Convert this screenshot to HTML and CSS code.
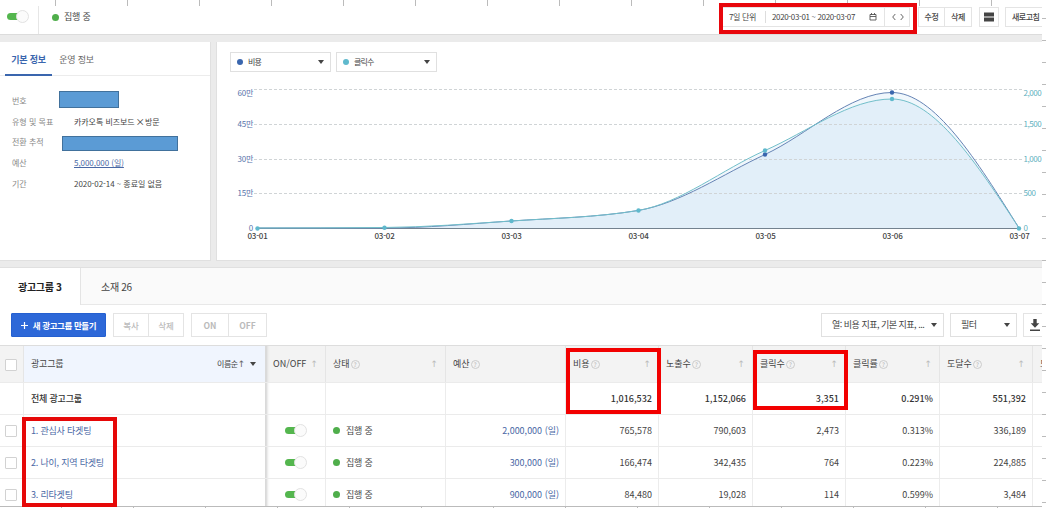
FILE: index.html
```html
<!DOCTYPE html>
<html lang="ko">
<head>
<meta charset="utf-8">
<title>광고그룹</title>
<link rel="stylesheet" href="styles.css">
</head>

<body>
<div class="sheet">
<div class="screen">

<!-- Header -->
<header class="topbar">
	<div class="topbar_toggle"><span class="toggle"></span></div>
	<div class="state"><i class="dot green"></i><span>집행 중</span></div>
	<div class="period">
		<span class="unit">7일 단위</span>
		<span class="range">2020-03-01 ~ 2020-03-07</span>
		<svg class="calendar" width="8" height="8" viewBox="0 0 8 8"><path d="M1 1.5h6v5.5h-6zM1 3.5h6M2.5 0v2M5.5 0v2"/></svg>
		<span class="arrows">
			<svg width="12" height="8" viewBox="0 0 12 8"><path d="M3.3 1L0.7 4L3.3 7M8.7 1L11.3 4L8.7 7"/></svg>
		</span>
	</div>
	<div class="group edit"><button>수정</button><button>삭제</button></div>
	<button class="layout"><svg width="10" height="10" viewBox="0 0 10 10"><path d="M0 0.5h10v4H0zM0 5.5h10v4H0z"/></svg></button>
	<button class="refresh">새로고침</button>
</header>

<!-- Info and chart -->
<div class="panels">
	<section class="panel info">
		<nav class="info_tabs"><a class="active">기본 정보</a><a>운영 정보</a></nav>
		<dl>
			<dt>번호</dt><dd class="wide"><span class="mask short"></span></dd>
			<dt>유형 및 목표</dt><dd>카카오톡 비즈보드 ⨉ 방문</dd>
			<dt>전환 추적</dt><dd class="wide"><span class="mask long"></span></dd>
			<dt>예산</dt><dd><a class="link">5,000,000 (일)</a></dd>
			<dt>기간</dt><dd>2020-02-14 ~ 종료일 없음</dd>
		</dl>
	</section>

	<section class="panel chart">
		<div class="metrics">
			<div class="select"><i class="dot blue"></i><span>비용</span><i class="caret"></i></div>
			<div class="select"><i class="dot teal"></i><span>클릭수</span><i class="caret"></i></div>
		</div>
		<svg class="plot" width="825" height="165" viewBox="0 0 825 165">
			<path class="area" d="M40 148H167C209.3 148 251.7 143.9 294 141S378.7 137.5 421 130.5S505.7 94.2 548 74.5S632.7 12.5 675 12.5S759.7 80.3 802 148Z"/>
			<path class="area" d="M40 148C82.3 148 124.7 147.8 167 147.5S251.7 143.8 294 141S378.7 137.5 421 130.5S505.7 89.1 548 70.5S632.7 19 675 19S759.7 83.5 802 148Z"/>
			<g class="grid">
				<path d="M37 9.5H805M37 44.5H805M37 79.5H805M37 113.5H805"/>
			</g>
			<path class="axis" d="M40 148.5H802"/>
			<path class="line blue" d="M40 148H167C209.3 148 251.7 143.9 294 141S378.7 137.5 421 130.5S505.7 94.2 548 74.5S632.7 12.5 675 12.5S759.7 80.3 802 148"/>
			<path class="line teal" d="M40 148C82.3 148 124.7 147.8 167 147.5S251.7 143.8 294 141S378.7 137.5 421 130.5S505.7 89.1 548 70.5S632.7 19 675 19S759.7 83.5 802 148"/>
			<g class="points blue">
				<circle cx="548" cy="74.5" r="2.2"/><circle cx="675" cy="12.5" r="2.2"/>
			</g>
			<g class="points teal">
				<circle cx="40.5" cy="148.5" r="2.2"/><circle cx="167.5" cy="147.8" r="2.2"/><circle cx="294.5" cy="141" r="2.2"/>
				<circle cx="421.5" cy="130.5" r="2.2"/><circle cx="548" cy="70.5" r="2.2"/><circle cx="675" cy="19" r="2.2"/>
				<circle cx="802" cy="148.5" r="2.2"/>
			</g>
			<g class="label left">
				<text x="36" y="15.5">60만</text><text x="36" y="46.5">45만</text><text x="36" y="81.5">30만</text>
				<text x="36" y="116">15만</text><text x="36" y="151">0</text>
			</g>
			<g class="label right">
				<text x="806.5" y="15.5">2,000</text><text x="806.5" y="46.5">1,500</text><text x="806.5" y="81.5">1,000</text>
				<text x="806.5" y="116">500</text><text x="806.5" y="151">0</text>
			</g>
			<g class="label days">
				<text x="40.5" y="159">03-01</text><text x="167.5" y="159">03-02</text><text x="294.5" y="159">03-03</text>
				<text x="421.5" y="159">03-04</text><text x="548.5" y="159">03-05</text><text x="675.5" y="159">03-06</text>
				<text x="802.5" y="159">03-07</text>
			</g>
		</svg>
	</section>
</div>

<!-- Ad groups -->
<nav class="tabs"><a class="active">광고그룹 3</a><a>소재 26</a></nav>

<div class="toolbar">
	<button class="create"><svg width="7" height="7" viewBox="0 0 7 7"><path d="M0 3.5h7M3.5 0v7"/></svg>새 광고그룹 만들기</button>
	<div class="group off copy"><button>복사</button><button>삭제</button></div>
	<div class="group off onoff"><button>ON</button><button>OFF</button></div>
	<div class="select columns"><span>열: 비용 지표, 기본 지표, ...</span><i class="caret"></i></div>
	<div class="select filter"><span>필터</span><i class="caret"></i></div>
	<button class="download"><svg width="10" height="13" viewBox="0 0 10 13"><path d="M3.3 0h3.4v4.2h2.6L5 8.8L0.7 4.2h2.6zM0 10.6h10v1.4H0z"/></svg></button>
</div>

<div class="table">
	<div class="row head">
		<div class="check"><i class="box"></i></div>
		<div class="name"><span>광고그룹</span><span class="sort">이름순<b class="up"></b><i class="caret"></i></span></div>
		<div><span>ON/OFF</span><b class="up"></b></div>
		<div><span>상태</span><i class="help">?</i><b class="up"></b></div>
		<div><span>예산</span><i class="help">?</i></div>
		<div><span>비용</span><i class="help">?</i><b class="up"></b></div>
		<div><span>노출수</span><i class="help">?</i><b class="up"></b></div>
		<div><span>클릭수</span><i class="help">?</i><b class="up"></b></div>
		<div><span>클릭률</span><i class="help">?</i><b class="up"></b></div>
		<div><span>도달수</span><i class="help">?</i><b class="up"></b></div>
		<div><span>도</span></div>
	</div>
	<div class="row total">
		<div class="check"></div>
		<div class="name">전체 광고그룹</div>
		<div></div><div></div><div></div>
		<div class="num">1,016,532</div>
		<div class="num">1,152,066</div>
		<div class="num">3,351</div>
		<div class="num">0.291%</div>
		<div class="num">551,392</div>
		<div></div>
	</div>
	<div class="row">
		<div class="check"><i class="box"></i></div>
		<div class="name"><a>1. 관심사 타겟팅</a></div>
		<div class="switch"><span class="toggle"></span></div>
		<div class="status"><i class="dot green"></i><span>집행 중</span></div>
		<div class="num"><a>2,000,000 (일)</a></div>
		<div class="num">765,578</div>
		<div class="num">790,603</div>
		<div class="num">2,473</div>
		<div class="num">0.313%</div>
		<div class="num">336,189</div>
		<div></div>
	</div>
	<div class="row">
		<div class="check"><i class="box"></i></div>
		<div class="name"><a>2. 나이, 지역 타겟팅</a></div>
		<div class="switch"><span class="toggle"></span></div>
		<div class="status"><i class="dot green"></i><span>집행 중</span></div>
		<div class="num"><a>300,000 (일)</a></div>
		<div class="num">166,474</div>
		<div class="num">342,435</div>
		<div class="num">764</div>
		<div class="num">0.223%</div>
		<div class="num">224,885</div>
		<div></div>
	</div>
	<div class="row">
		<div class="check"><i class="box"></i></div>
		<div class="name"><a>3. 리타겟팅</a></div>
		<div class="switch"><span class="toggle"></span></div>
		<div class="status"><i class="dot green"></i><span>집행 중</span></div>
		<div class="num"><a>900,000 (일)</a></div>
		<div class="num">84,480</div>
		<div class="num">19,028</div>
		<div class="num">114</div>
		<div class="num">0.599%</div>
		<div class="num">3,484</div>
		<div></div>
	</div>
</div>

</div>

<!-- Sheet grid ticks around the screen -->
<div class="ticks top"></div>
<div class="ticks side"></div>
<div class="ticks bottom"></div>

<!-- Red highlight boxes -->
<div class="mark mark_period"></div>
<div class="mark mark_cost"></div>
<div class="mark mark_clicks"></div>
<div class="mark mark_names"></div>
</div>
</body>
</html>
```

FILE: styles.css
```css
* {
	box-sizing: border-box;
}

body {
	margin: 0;
	background: white;
	color: #444;
	font-family: "Noto Sans CJK KR", sans-serif;
	font-size: 9px;
	line-height: 12px;
	overflow: hidden;
}

button {
	font: inherit;
	color: #444;
	background: white;
	border: 1px solid #e4e4e4;
	padding: 0;
}

i, b {
	font-style: normal;
	flex: none;
}

.sheet {
	position: relative;
	width: 1046px;
	height: 508px;
	overflow: hidden;
}

.screen {
	width: 1042px;
	height: 507px;
	overflow: hidden;
	border-bottom: 1px solid #bbb;
}

/* Header */
.topbar {
	display: flex;
	align-items: center;
	height: 34px;
	font-size: 8px;
	white-space: nowrap;
}

.topbar_toggle {
	display: flex;
	align-items: center;
	width: 39px;
	height: 28px;
	margin-top: 6px;
	padding: 0 0 7px 7px;
	border-right: 1px solid #e6e6e6;
}

.toggle {
	display: flex;
	justify-content: flex-end;
	align-items: center;
	width: 22px;
	height: 7px;
	border-radius: 4px;
	background: linear-gradient(to right, #54b64e 16px, transparent 16px);
}

.toggle::after {
	content: "";
	width: 11px;
	height: 11px;
	flex: none;
	border: 1px solid #e2e2e2;
	border-radius: 50%;
	background: #fbfbfb;
}

.dot {
	width: 6px;
	height: 6px;
	border-radius: 50%;
}

.dot.green {
	width: 7px;
	height: 7px;
	background: #4fae4b;
}

.dot.blue { background: #3a66ae; }
.dot.teal { background: #5fb9cd; }

.state {
	display: flex;
	align-items: center;
	gap: 5px;
	margin-left: 13px;
	font-size: 9px;
	letter-spacing: -0.2px;
}

.period {
	display: flex;
	align-items: center;
	width: 190px;
	height: 20px;
	margin-left: auto;
	padding-left: 8px;
	border: 1px solid #e4e4e4;
}

.unit {
	width: 37px;
	border-right: 1px solid #ddd;
	letter-spacing: -0.35px;
}

.range {
	width: 103px;
	padding-left: 6px;
	letter-spacing: -0.35px;
}

.period svg {
	flex: none;
	fill: none;
	stroke: #555;
	stroke-width: 0.9;
}

.arrows {
	display: flex;
	align-items: center;
	height: 18px;
	margin-left: 7px;
	padding-left: 7px;
	border-left: 1px solid #e4e4e4;
}

.group {
	display: flex;
}

.group button + button {
	border-left: 0;
}

.edit {
	margin-left: 8px;
}

.edit button {
	width: 27px;
	height: 20px;
	font-weight: 500;
	letter-spacing: -0.3px;
}

.layout {
	display: flex;
	justify-content: center;
	align-items: center;
	width: 20px;
	height: 20px;
	margin-left: 7px;
}

.layout svg, .download svg {
	fill: #444;
}

.refresh {
	width: 37px;
	height: 20px;
	margin-left: 6px;
	padding-left: 6px;
	border-right: 0;
	text-align: left;
	font-weight: 500;
	letter-spacing: -0.5px;
}

/* Panels */
.panels {
	display: flex;
	gap: 6px;
	height: 233px;
	padding: 7px 0 6px;
	background: #ebebeb;
	border-top: 1px solid #dcdcdc;
}

.panel {
	background: white;
	border: 1px solid #e0e0e0;
	border-top: 0;
}

.info {
	width: 211px;
	border-left: 0;
	font-size: 8px;
}

.info_tabs {
	display: flex;
	height: 34px;
	padding-left: 5px;
	border-bottom: 1px solid #ececec;
	font-size: 9px;
}

.info_tabs a {
	width: 47px;
	height: 34px;
	padding-top: 12px;
	text-align: center;
	color: #666;
	white-space: nowrap;
	letter-spacing: -0.2px;
}

.info_tabs a + a {
	margin-left: 1px;
}

.info_tabs .active {
	border-bottom: 2px solid #3a66ae;
	color: #3a66ae;
	font-weight: bold;
}

dl {
	display: grid;
	grid-template-columns: 62px 1fr;
	grid-auto-rows: 20.6px;
	align-items: center;
	margin: 15px 0 0 12px;
}

dt {
	color: #888;
	white-space: nowrap;
}

dd {
	margin: 0;
	white-space: nowrap;
	letter-spacing: -0.05px;
}

.wide {
	display: flex;
}

.mask {
	background: #5b9bd5;
	border: 1px solid #41719c;
}

.short {
	width: 60px;
	height: 17px;
	margin: -3px 0 0 -15px;
}

.long {
	width: 116px;
	height: 15px;
	margin: 2px 0 0 -12px;
}

a {
	color: #4a68a5;
}

.link {
	text-decoration: underline;
}

.chart {
	flex: 1;
	border-right: 0;
	padding: 10px 0 0 13px;
	margin-left: -1px;
}

.metrics {
	display: flex;
	gap: 5px;
}

.select {
	display: flex;
	align-items: center;
	width: 101px;
	height: 20px;
	padding: 0 6px;
	border: 1px solid #e0e0e0;
	background: white;
	font-size: 8px;
	letter-spacing: -0.8px;
	white-space: nowrap;
}

.select .dot {
	margin-right: 5px;
}

.caret {
	margin-left: auto;
	border: 3px solid transparent;
	border-top: 4px solid #444;
	border-bottom: 0;
}

.plot {
	display: block;
	margin: 8px 0 0 -13px;
}

.area {
	fill: #5aa8e0;
	fill-opacity: 0.09;
}

.grid path {
	stroke: #d0d4d6;
	stroke-dasharray: 3 2;
}

.axis {
	stroke: #73828f;
}

.line {
	fill: none;
}

.line.blue { stroke: #6684b5; }
.line.teal { stroke: #72bfca; }
.points.blue { fill: #3a66ae; }
.points.teal { fill: #5fb9cd; }

.label {
	font-size: 8px;
}

.left {
	fill: #5673aa;
	text-anchor: end;
	letter-spacing: -0.25px;
}

.right {
	fill: #5fb0c0;
	letter-spacing: -0.45px;
}

.days {
	fill: #444;
	font-weight: 500;
	text-anchor: middle;
	letter-spacing: -0.2px;
}

/* Tabs and toolbar */
.tabs {
	display: flex;
	height: 38px;
	background: #fafafa;
	border-top: 1px solid #e0e0e0;
	border-bottom: 1px solid #e8e8e8;
	font-size: 10px;
	letter-spacing: -0.3px;
}

.tabs a {
	padding: 13px 20px 0;
	color: #444;
}

.tabs .active {
	width: 81px;
	height: 37px;
	padding: 13px 0 0 18px;
	background: white;
	border-right: 1px solid #e4e4e4;
	color: #222;
	font-weight: bold;
}

.toolbar {
	display: flex;
	align-items: center;
	height: 40px;
	padding-left: 11px;
	white-space: nowrap;
}

.toolbar button {
	height: 24px;
}

.toolbar .create {
	display: flex;
	align-items: center;
	justify-content: center;
	gap: 5px;
	width: 95px;
	background: #2d68d8;
	border-color: #2560d0;
	border-radius: 1px;
	color: white;
	font-size: 8.5px;
	font-weight: bold;
	letter-spacing: -0.4px;
}

.create svg {
	stroke: white;
	stroke-width: 1.2;
}

.off {
	margin-left: 7px;
}

.off button {
	width: 35px;
	color: #bbb;
	font-size: 8.5px;
	font-weight: 500;
}

.off button:first-child {
	width: 36px;
}

.onoff button, .onoff button:first-child {
	width: 38px;
	font-weight: bold;
}

.toolbar .select {
	height: 24px;
	padding: 0 6px 0 10px;
	font-size: 9px;
	letter-spacing: -0.5px;
}

.toolbar .columns {
	width: 123px;
	margin-left: auto;
}

.toolbar .filter {
	width: 67px;
	margin: 0 6px;
}

.download {
	display: flex;
	justify-content: center;
	align-items: center;
	width: 19px;
	padding-left: 4px;
	border-right: 0;
}

/* Table */
.row {
	display: grid;
	grid-template-columns: 24px 242px 60px 120px 120px 93px 94px 93px 94px 93px 9px;
	height: 32px;
	border-bottom: 1px solid #ebebeb;
}

.row > div {
	display: flex;
	align-items: center;
	padding: 0 7px;
	border-right: 1px solid #ececec;
	overflow: hidden;
	white-space: nowrap;
}

.row > .check {
	padding-left: 5px;
}

.row > div:last-child {
	border-right: 0;
}

.row > .name {
	border-right-color: #dadada;
	letter-spacing: -0.2px;
}

.row > .name + div {
	box-shadow: inset 4px 0 3px -3px #ccc;
}

.head {
	height: 38px;
	background: #f3f3f3;
	border-top: 1px solid #ddd;
}

.head > div {
	border-color: #e5e5e5;
}

.head > .name {
	background: #f0f5fe;
}

.head > .check {
	padding-top: 2px;
}

.box {
	width: 12px;
	height: 12px;
	border: 1px solid #d2d2d2;
	border-radius: 1px;
	background: white;
}

.help {
	width: 9px;
	height: 9px;
	margin-left: 1px;
	border: 1px solid #ccc;
	border-radius: 50%;
	color: #aaa;
	font-size: 6px;
	line-height: 7px;
	text-align: center;
}

.up {
	margin-left: auto;
	font-size: 9px;
}

.up::before {
	content: "↑";
	color: #bbb;
	font-family: "DejaVu Sans", sans-serif;
	font-weight: normal;
}

.sort {
	display: flex;
	align-items: center;
	margin: 0 2px 0 auto;
	font-size: 8px;
	letter-spacing: -0.4px;
}

.sort .up::before {
	color: #666;
}

.sort .caret {
	margin-left: 5px;
}

.total {
	color: #333;
	font-weight: 500;
}

.switch .toggle {
	margin-left: 12px;
}

.status {
	letter-spacing: -0.2px;
}

.status .dot {
	margin-right: 6px;
}

.row > .num {
	justify-content: flex-end;
	padding-right: 6px;
}

/* Sheet ticks */
.ticks {
	position: absolute;
	background: repeating-linear-gradient(to right, #bbb 0 1px, transparent 1px 72px);
}

.top {
	left: 55px;
	top: 0;
	width: 987px;
	height: 6px;
}

.side {
	left: 1042px;
	top: 18px;
	width: 4px;
	height: 490px;
	background: repeating-linear-gradient(#bbb 0 1px, transparent 1px 22px);
}

.bottom {
	left: 61px;
	top: 506px;
	width: 981px;
	height: 2px;
}

/* Highlight boxes */
.mark {
	position: absolute;
	border: 4px solid #f20000;
}

.mark_period {
	left: 719px;
	top: 3px;
	width: 198px;
	height: 31px;
	border-color: #e8060c;
}

.mark_cost {
	left: 566px;
	top: 348px;
	width: 95px;
	height: 66px;
}

.mark_clicks {
	left: 753px;
	top: 350px;
	width: 95px;
	height: 60px;
}

.mark_names {
	left: 22px;
	top: 417px;
	width: 95px;
	height: 90px;
	border-color: #e60808;
}
```
